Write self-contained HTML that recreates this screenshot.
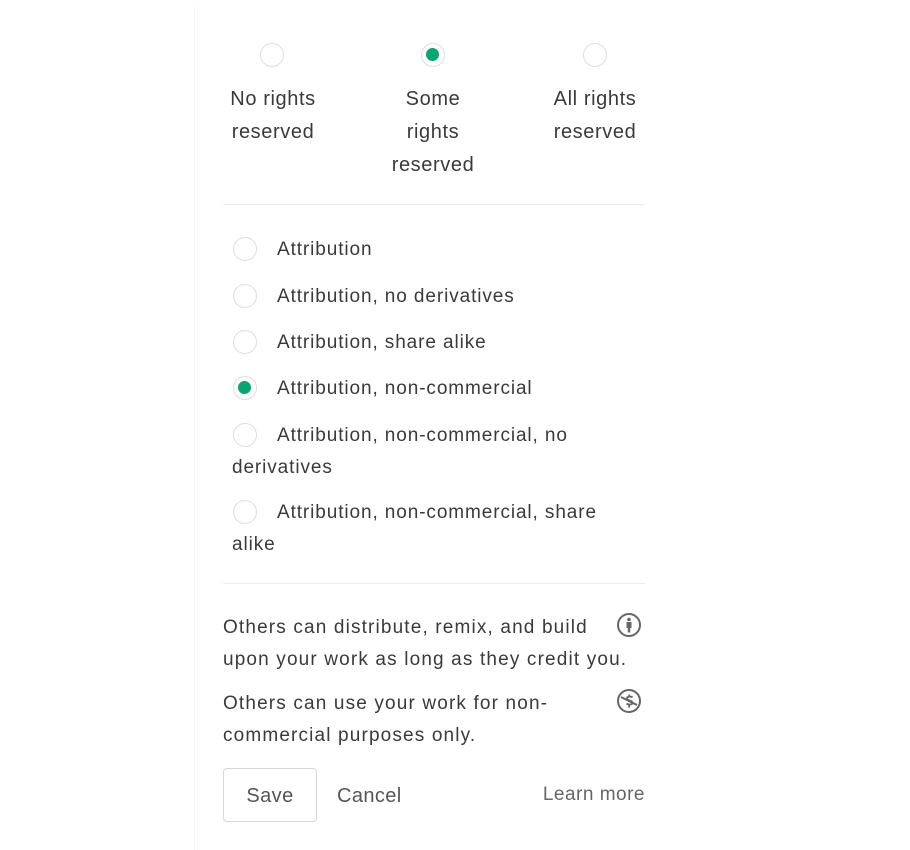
<!DOCTYPE html>
<html><head><meta charset="utf-8"><style>
html,body{margin:0;padding:0;background:#fff;width:910px;height:850px;overflow:hidden}
body{font-family:"Liberation Sans","DejaVu Sans",sans-serif;color:#3a3a3a;position:relative}
.a{position:absolute;white-space:nowrap}
.r{position:absolute;width:24px;height:24px;border:1.5px solid #dedede;border-radius:50%;box-sizing:border-box;background:#fff}
.r.on::after{content:"";position:absolute;left:4px;top:4px;width:13px;height:13px;border-radius:50%;background:#0aa471}
.top{font-size:20px;line-height:33px;text-align:center;width:160px;letter-spacing:0.6px}
.li{font-size:19px;line-height:32px;letter-spacing:0.9px}
.ds{font-size:19px;line-height:32px;letter-spacing:1.15px}
.hr{position:absolute;left:223px;width:422px;height:1px;background:#ececec}
</style></head><body>
<div class="a" style="left:194px;top:6px;width:1px;height:844px;background:#f4f4f4"></div>

<div class="r" style="left:260px;top:43px"></div>
<div class="r on" style="left:421px;top:43px"></div>
<div class="r" style="left:583px;top:43px"></div>
<div class="a top" style="left:193px;top:83px">No rights<br>reserved</div>
<div class="a top" style="left:353px;top:83px">Some<br>rights<br>reserved</div>
<div class="a top" style="left:515px;top:83px">All rights<br>reserved</div>

<div class="hr" style="top:204px"></div>

<div class="r" style="left:233px;top:237px"></div>
<div class="a li" style="left:277px;top:234px">Attribution</div>
<div class="r" style="left:233px;top:284px"></div>
<div class="a li" style="left:277px;top:281px">Attribution, no derivatives</div>
<div class="r" style="left:233px;top:330px"></div>
<div class="a li" style="left:277px;top:327px">Attribution, share alike</div>
<div class="r on" style="left:233px;top:376px"></div>
<div class="a li" style="left:277px;top:373px">Attribution, non-commercial</div>
<div class="r" style="left:233px;top:423px"></div>
<div class="a li" style="left:277px;top:420px">Attribution, non-commercial, no</div>
<div class="a li" style="left:232px;top:452px">derivatives</div>
<div class="r" style="left:233px;top:500px"></div>
<div class="a li" style="left:277px;top:497px">Attribution, non-commercial, share</div>
<div class="a li" style="left:232px;top:529px">alike</div>

<div class="hr" style="top:583px"></div>

<div class="a ds" style="left:223px;top:612px">Others can distribute, remix, and build<br>upon your work as long as they credit you.</div>
<div class="a ds" style="left:223px;top:688px">Others can use your work for non-<br>commercial purposes only.</div>

<svg class="a" style="left:616px;top:612px" width="26" height="26" viewBox="0 0 26 26">
<circle cx="13" cy="13" r="11" fill="none" stroke="#666" stroke-width="2"/>
<circle cx="13" cy="7.5" r="1.8" fill="#666"/>
<path d="M10.5 10h5v6h-1.3v4.5h-2.4V16h-1.3z" fill="#666"/>
</svg>
<svg class="a" style="left:616px;top:688px" width="26" height="26" viewBox="0 0 26 26">
<circle cx="13" cy="13" r="11" fill="none" stroke="#666" stroke-width="2"/>
<path d="M5 9l16 8" stroke="#666" stroke-width="2"/>
<path d="M16.5 9.5c-1-1.2-5.5-1.5-5.5 0.8 0 2.5 5.5 1.8 5.5 4.5 0 2.2-4.5 2-6 0.8M13.2 6.5v2M13.2 17v2.5" fill="none" stroke="#666" stroke-width="1.8"/>
</svg>

<div class="a" style="left:223px;top:768px;width:94px;height:54px;border:1px solid #d6d6d6;border-radius:4px;box-sizing:border-box;font-size:20px;line-height:54px;text-align:center;color:#555;letter-spacing:0.4px">Save</div>
<div class="a" style="left:337px;top:782px;font-size:20px;line-height:28px;color:#555;letter-spacing:0.4px">Cancel</div>
<div class="a" style="right:265px;top:781px;font-size:19px;line-height:28px;color:#666;letter-spacing:0.5px">Learn more</div>
</body></html>
